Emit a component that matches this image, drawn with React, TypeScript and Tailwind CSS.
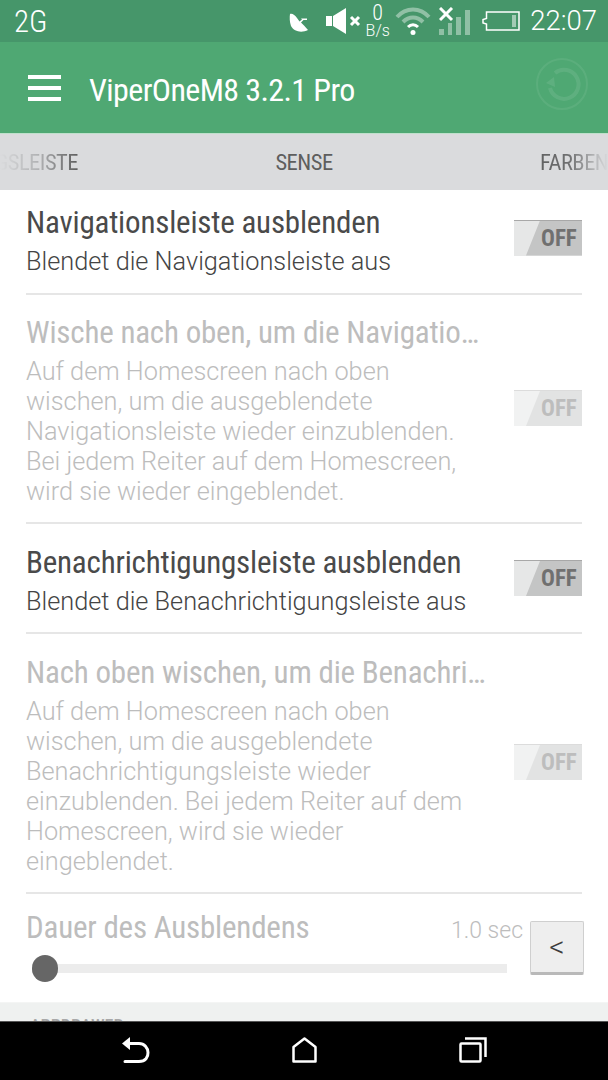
import React from 'react';

const titleFont = "font-['Roboto',sans-serif] [font-stretch:75%]";

const Toggle = ({ dim, className = '' }: { dim?: boolean; className?: string }) => (
  <div className={`relative w-[68px] h-9 overflow-hidden border-t ${dim ? 'bg-[#f1f2f2] border-[#dcdcdc]' : 'bg-[#e6e7e7] border-[#a8a8a8]'} ${className}`}>
    <div className={`absolute inset-0 [clip-path:polygon(26px_0,100%_0,100%_100%,12px_100%)] ${dim ? 'bg-[#e2e3e3]' : 'bg-[#c4c5c5]'}`} />
    <span className={`absolute left-[27px] top-1 text-[23px] leading-7 font-bold ${titleFont} ${dim ? 'text-[#bdbdbd]' : 'text-[#707070]'}`}>OFF</span>
  </div>
);

const Row = ({ title, lines, dim, height, top, toggle }: { title: string; lines: string[]; dim?: boolean; height: string; top: string; toggle?: string }) => (
  <div className={`flex items-center justify-between border-b-2 border-[#e6e6e6] ${height}`}>
    <div className={`min-w-0 self-start ${top}`}>
      <div className={`text-[31px] leading-9 font-[450] tracking-[-0.2px] whitespace-nowrap ${titleFont} ${dim ? 'text-[#bdbdbd]' : 'text-[#4a4a4a]'}`}>{title}</div>
      <div className={`mt-[6px] text-[25.3px] leading-[30px] font-light ${dim ? 'text-[#bdbdbd]' : 'text-[#444444]'}`}>
        {lines.map((l) => (
          <div key={l} className="whitespace-nowrap">{l}</div>
        ))}
      </div>
    </div>
    <Toggle dim={dim} className={toggle} />
  </div>
);

export default function App() {
  return (
    <div className="w-[608px] h-[1080px] flex flex-col overflow-hidden bg-white font-['Roboto',sans-serif]">
      <div className="h-[42px] bg-[#46966a] flex items-center text-white pl-[14px] pr-[11px]">
        <span className={`text-[31px] leading-none font-light ${titleFont}`}>2G</span>
        <div className="ml-auto flex items-center">
          <svg width="20" height="20" viewBox="0 0 20 20" className="mt-1" fill="#fff">
            <path d="M1 1C3 0 6 2 8 5L10.500 8.500L13 6.500L12 5.500H18V7H14.500L12 9.500L15 12.500L19 17C13 20 5 19 2 13C0.500 9 0.500 4 1 1Z" />
          </svg>
          <svg width="35" height="26" viewBox="0 0 35 26" fill="#fff" className="ml-[17px]">
            <path d="M0 8h6v10H0zM7 8L20 0v26L7 18z" />
            <path d="M25 9l8 8M33 9l-8 8" stroke="#fff" strokeWidth="3" />
          </svg>
          <div className="w-[25px] ml-1 -mt-[3px] flex flex-col items-center font-light">
            <span className={`text-[22px] leading-[21px] ${titleFont}`}>0</span>
            <span className="text-[16px] leading-[15px]">B/s</span>
          </div>
          <svg width="36" height="28" viewBox="0 0 36 28" fill="none" className="ml-[5px]">
            <path d="M2 10 C11 0 25 0 34 10" stroke="#ffffff" strokeOpacity="0.4" strokeWidth="4" />
            <path d="M8 15 C14 9 22 9 28 15" stroke="#ffffff" strokeOpacity="0.4" strokeWidth="4" />
            <path d="M13 20 C16 17 20 17 23 20" stroke="#fff" strokeWidth="3" />
            <circle cx="18" cy="25.500" r="2.500" fill="#fff" />
          </svg>
          <svg width="32" height="28" viewBox="0 0 32 28" className="ml-2">
            <path d="M1 1l12 12M13 1l-12 12" stroke="#fff" strokeWidth="3" />
            <g fill="#ffffff" fillOpacity="0.4">
              <rect x="0" y="22" width="5" height="6" />
              <rect x="9" y="16" width="4" height="12" />
              <rect x="17" y="10" width="5" height="18" />
              <rect x="26" y="3" width="5" height="25" />
            </g>
          </svg>
          <svg width="38" height="20" viewBox="0 0 38 20" fill="none" className="ml-[11px]">
            <path d="M4.500 4V7.500L1 8.500V12L4.500 13V19H37V1H4.500z" stroke="#fff" strokeWidth="1.500" />
            <rect x="30" y="4" width="4" height="12" fill="#ffffff" fillOpacity="0.5" />
          </svg>
          <span className="ml-[10px] text-[27.5px] leading-none font-light">22:07</span>
        </div>
      </div>

      <div className="h-[91px] bg-[#4fa873] flex items-center pl-7 pr-[20px] text-white">
        <div className="w-[33px] flex flex-col gap-[7px]">
          <div className="h-1 bg-white" />
          <div className="h-1 bg-white" />
          <div className="h-1 bg-white" />
        </div>
        <span className={`ml-[28px] mt-1 text-[32px] leading-none tracking-[-0.6px] ${titleFont}`}>ViperOneM8 3.2.1 Pro</span>
        <svg width="52" height="52" viewBox="0 0 52 52" fill="none" className="ml-auto -mt-2">
          <circle cx="26" cy="26" r="25" stroke="#ffffff" strokeOpacity="0.07" strokeWidth="2" />
          <path d="M14 30 A14.500 14.500 0 1 0 19 15" stroke="#ffffff" strokeOpacity="0.09" strokeWidth="4" />
          <path d="M10 25l8-6 1 10z" fill="#ffffff" fillOpacity="0.09" />
        </svg>
      </div>

      <div className={`h-[57px] border-t border-[#bfe0cb] bg-[#dadbdd] text-[22.5px] tracking-[-0.5px] text-[#5e5e5e] ${titleFont}`}>
        <div className="grid grid-cols-[78px_1fr_78px] items-center h-full pt-[2px]">
          <span className="overflow-hidden whitespace-nowrap [direction:rtl] bg-gradient-to-r from-[#dadbdd] via-[#b0b1b3] to-[#5e5e5e] bg-clip-text text-transparent">NGSLEISTE</span>
          <span className="text-center">SENSE</span>
          <span className="pl-[10px] overflow-hidden whitespace-nowrap bg-gradient-to-r from-[#5e5e5e] via-[#6f7071] to-[#dadbdd] bg-clip-text text-transparent">FARBEN</span>
        </div>
      </div>

      <div className="px-[26px]">
        <Row height="h-[105px]" top="pt-[15px]" toggle="mb-2" title="Navigationsleiste ausblenden" lines={['Blendet die Navigationsleiste aus']} />
        <Row dim height="h-[229px]" top="pt-5" toggle="mb-px" title="Wische nach oben, um die Navigatio…" lines={['Auf dem Homescreen nach oben', 'wischen, um die ausgeblendete', 'Navigationsleiste wieder einzublenden.', 'Bei jedem Reiter auf dem Homescreen,', 'wird sie wieder eingeblendet.']} />
        <Row height="h-[110px]" top="pt-[21px]" title="Benachrichtigungsleiste ausblenden" lines={['Blendet die Benachrichtigungsleiste aus']} />
        <Row dim height="h-[260px]" top="pt-[21px]" toggle="mb-[2px]" title="Nach oben wischen, um die Benachri…" lines={['Auf dem Homescreen nach oben', 'wischen, um die ausgeblendete', 'Benachrichtigungsleiste wieder', 'einzublenden. Bei jedem Reiter auf dem', 'Homescreen, wird sie wieder', 'eingeblendet.']} />
      </div>

      <div className="h-[108px] pl-[26px] pr-6 flex items-start">
        <div className="flex-1 min-w-0">
          <div className="flex items-baseline justify-between pt-4">
            <span className={`text-[31px] leading-9 font-[450] tracking-[-0.2px] text-[#bdbdbd] ${titleFont}`}>Dauer des Ausblendens</span>
            <span className="text-[23px] font-light text-[#bdbdbd] mr-[7px]">1.0 sec</span>
          </div>
          <div className="relative mt-[15px] ml-[6px] mr-[23px] h-[9px] bg-[#ececec]">
            <div className="absolute left-0 -top-[9px] w-[26px] h-[27px] rounded-full bg-[#666666]" />
          </div>
        </div>
        <div className="mt-[27px] w-[54px] h-[54px] bg-[#eeeeee] border border-[#cfcfcf] border-b-[3px] border-b-[#b9b9b9] rounded-[2px] flex items-center justify-center text-[30px] font-light leading-none text-[#3c3c3c]">&lt;</div>
      </div>

      <div className="h-[19px] bg-[#eff1f0] overflow-hidden pl-[30px] pt-[13px] border-t border-[#f4f5f4]">
        <div className={`text-[18px] leading-5 font-medium text-[#a8a8a8] ${titleFont}`}>APPDRAWER</div>
      </div>

      <div className="flex-1 bg-black border-t border-[#555] flex items-center text-white pb-[2px]">
        <svg width="28" height="26" viewBox="0 0 28 26" fill="none" className="ml-[122px]">
          <path d="M4 6.500H17C28 6.500 30 24.500 17 24.500H3" stroke="#fff" strokeWidth="3" strokeLinecap="round" />
          <path d="M0 6.500L8 0V13Z" fill="#fff" />
        </svg>
        <svg width="25" height="26" viewBox="0 0 25 26" fill="none" className="ml-[142px]">
          <path d="M12.500 1.500L23.500 10V24.500H1.500V10Z" stroke="#fff" strokeWidth="2.500" strokeLinejoin="round" />
        </svg>
        <svg width="28" height="26" viewBox="0 0 28 26" fill="none" className="ml-[142px]">
          <rect x="1.500" y="6.500" width="20" height="18" rx="1" stroke="#fff" strokeWidth="2.500" />
          <path d="M6 1.500H26.500V20" stroke="#fff" strokeWidth="2.500" />
        </svg>
      </div>
    </div>
  );
}
